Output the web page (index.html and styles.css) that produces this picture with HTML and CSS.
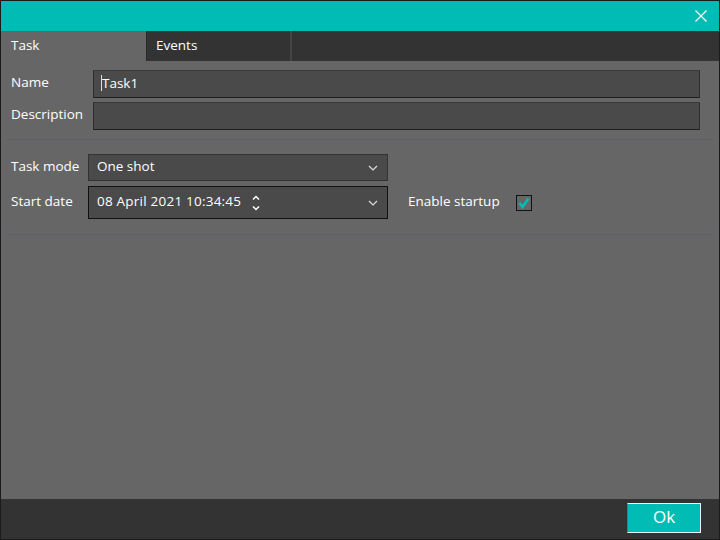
FILE: index.html
```html
<!DOCTYPE html>
<html>
<head>
<meta charset="utf-8">
<link rel="stylesheet" href="styles.css">
</head>
<body>
<div class="window">
  <div class="titlebar">
    <svg class="close" width="12" height="12" viewBox="0 0 12 12"><path d="M0.5 0.5L11.5 11.5M11.5 0.5L0.5 11.5" stroke="#fff" stroke-width="1.2" fill="none"/></svg>
  </div>
  <div class="tabs">
    <div class="tab active">Task</div>
    <div class="tab">Events</div>
    <div class="tab-rest"></div>
  </div>
  <div class="content">
    <div class="section top">
      <div class="field">
        <label class="lbl">Name</label>
        <div class="input"><span class="caret"></span>Task1</div>
      </div>
      <div class="field">
        <label class="lbl">Description</label>
        <div class="input"></div>
      </div>
    </div>
    <div class="section mid">
      <div class="field2">
        <label class="lbl">Task mode</label>
        <div class="combo">
          <span class="val">One shot</span>
          <svg class="chev" width="10" height="6" viewBox="0 0 10 6"><path d="M1 1L5 5L9 1" stroke="#ddd" stroke-width="1.2" fill="none"/></svg>
        </div>
      </div>
      <div class="field2">
        <label class="lbl">Start date</label>
        <div class="combo date">
          <span class="val">08 April 2021 10:34:45</span>
          <span class="spin">
            <svg width="8" height="5" viewBox="0 0 8 5"><path d="M1 4.5L4 1.5L7 4.5" stroke="#fff" stroke-width="1.5" fill="none"/></svg>
            <svg width="8" height="5" viewBox="0 0 8 5"><path d="M1 0.5L4 3.5L7 0.5" stroke="#fff" stroke-width="1.5" fill="none"/></svg>
          </span>
          <svg class="chev" width="10" height="6" viewBox="0 0 10 6"><path d="M1 1L5 5L9 1" stroke="#ddd" stroke-width="1.2" fill="none"/></svg>
        </div>
        <label class="lbl startup">Enable startup</label>
        <div class="check">
          <svg width="14" height="14" viewBox="0 0 14 14"><path d="M2.5 7L5.5 11L11.5 2.5" stroke="#00bcb4" stroke-width="2.6" fill="none"/></svg>
        </div>
      </div>
    </div>
  </div>
  <div class="footer">
    <div class="ok">Ok</div>
  </div>
</div>
</body>
</html>
```
FILE: styles.css
```css
html, body {
  margin: 0;
  padding: 0;
}
body {
  font-family: "Open Sans", "Noto Sans", sans-serif;
  font-size: 13px;
  color: #fff;
}
.window {
  width: 720px;
  height: 540px;
  box-sizing: border-box;
  border: 1px solid #1b1b1b;
  background: #666666;
  display: flex;
  flex-direction: column;
}
.titlebar {
  height: 30px;
  background: #00bcb4;
  display: flex;
  align-items: center;
  justify-content: flex-end;
  padding-right: 12px;
}
.close {
  display: block;
}
.tabs {
  height: 30px;
  display: flex;
  background: #333333;
}
.tab {
  width: 144px;
  box-sizing: border-box;
  padding-left: 9px;
  line-height: 28px;
  font-size: 13.5px;
  background: #333333;
  border-left: 1px solid #2a2a2a;
}
.tab.active {
  width: 145px;
  background: #666666;
  border-left: none;
  padding-left: 10px;
}
.tab-rest {
  flex: 1;
  border-left: 2px solid #444444;
}
.content {
  flex: 1;
  padding: 0 5px;
}
.section {
  border-bottom: 1px solid #5b6069;
}
.top {
  padding: 9px 14px 9px 5px;
  display: flex;
  flex-direction: column;
  gap: 4px;
}
.field {
  display: grid;
  grid-template-columns: 82px 1fr;
  align-items: center;
}
.lbl {
  font-size: 13.5px;
  line-height: 18px;
  padding-bottom: 4px;
  white-space: nowrap;
}
.input {
  height: 28px;
  box-sizing: border-box;
  background: #4a4a4a;
  border: 1px solid #2e2e2e;
  border-top-color: #3a3a3a;
  border-bottom-color: #1e1e1e;
  padding-left: 7px;
  padding-bottom: 3px;
  font-size: 13.5px;
  display: flex;
  align-items: center;
}
.caret {
  display: inline-block;
  width: 1px;
  height: 16px;
  background: #ddd;
}
.mid {
  padding: 14px 14px 15px 5px;
  display: flex;
  flex-direction: column;
  gap: 5px;
}
.field2 {
  display: flex;
  align-items: center;
}
.field2 > .lbl:first-child {
  width: 77px;
}
.combo {
  width: 300px;
  height: 27px;
  box-sizing: border-box;
  background: #4a4a4a;
  border: 1px solid #333333;
  display: flex;
  align-items: center;
  padding-left: 8px;
  padding-right: 9px;
  font-size: 13.5px;
}
.combo .val {
  padding-bottom: 3px;
}
.combo.date {
  height: 33px;
  border-color: #111111;
}
.date .val {
  letter-spacing: 0.22px;
}
.val {
  white-space: nowrap;
}
.spin {
  display: flex;
  flex-direction: column;
  gap: 6px;
  margin-left: 11px;
}
.spin svg {
  display: block;
}
.chev {
  margin-left: auto;
  display: block;
}
.startup {
  margin-left: 20px;
  width: 108px;
}
.check {
  width: 16px;
  height: 16px;
  box-sizing: border-box;
  border: 1px solid #111;
  display: flex;
  align-items: center;
  justify-content: center;
  margin-top: 1px;
}
.check svg {
  display: block;
}
.footer {
  height: 40px;
  background: #333333;
  display: flex;
  justify-content: flex-end;
  align-items: flex-start;
  padding-right: 18px;
  padding-top: 4px;
  box-sizing: border-box;
}
.ok {
  width: 74px;
  height: 30px;
  box-sizing: border-box;
  background: #00bcb4;
  border: 1px solid #e8f5f4;
  border-left-color: #6a6a6a;
  text-align: center;
  line-height: 26px;
  font-size: 17px;
}
```
